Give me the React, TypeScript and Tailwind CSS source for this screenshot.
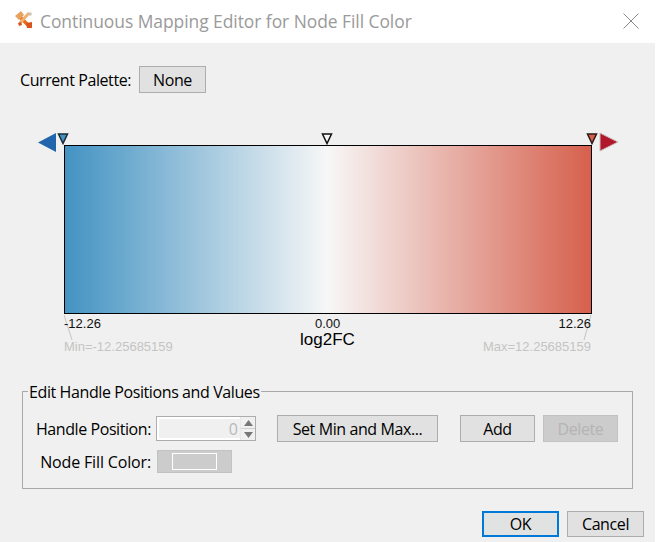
export default function App() {
  const ui = "font-['Open_Sans','Noto_Sans',sans-serif]";
  const btn =
    "flex items-center justify-center border border-[#adadad] bg-[#e1e1e1] text-[16px] leading-none text-black tracking-[-0.4px] " + ui;
  return (
    <div className={"w-[656px] h-[542px] bg-white overflow-hidden " + ui}>
      <div className="h-[43px] flex items-center relative">
        <svg width="18" height="18" viewBox="0 0 18 18" className="ml-[15px] mt-[-3px]">
          <path d="M3 4 L14 15" stroke="#e0701f" strokeWidth="3.6" />
          <path d="M14 2 L5 12" stroke="#f0b070" strokeWidth="3" />
          <path d="M0 5 L6 0 L9 4 L4 9 Z" fill="#e8a25e" />
          <path d="M11 12 L17 11 L17 17 L12 17 Z" fill="#d9531e" />
          <path d="M3 12 L6 11 L7 14 L4 15 Z" fill="#d9531e" />
          <circle cx="15" cy="3" r="1.8" fill="#c9c2b0" />
        </svg>
        <span className="ml-[7px] text-[17.45px] text-[#9a9a9a] tracking-[-0.05px] mt-[-1px]">
          Continuous Mapping Editor for Node Fill Color
        </span>
        <svg width="16" height="16" viewBox="0 0 16 16" className="absolute left-[623px] top-[13px]">
          <path d="M0.5 0.5 L15.5 15.5 M15.5 0.5 L0.5 15.5" stroke="#8a8a8a" strokeWidth="1" fill="none" />
        </svg>
      </div>

      <div className="w-[655px] h-[499px] bg-[#f0f0f0] flex flex-col">
        <div className="flex items-center ml-[20px] mt-[23px] h-[27px]">
          <span className="w-[119px] text-[16px] text-black tracking-[-0.42px]">Current Palette:</span>
          <div className={btn + " w-[67px] h-[27px]"}>None</div>
        </div>

        <div className="relative ml-[64px] mt-[52px] w-[528px] h-[169px] border border-black bg-[linear-gradient(to_right,#4393c3,#f7f7f7_50%,#d6604d)]">
          <svg width="20" height="19" viewBox="0 0 20 19" className="absolute left-[-27px] top-[-13px]">
            <path d="M0 9.5 L18 0 L18 19 Z" fill="#2166ac" />
          </svg>
          <svg width="12" height="12" viewBox="0 0 12 12" className="absolute left-[-8px] top-[-13px]">
            <path d="M1.5 1 L10.5 1 L6 10.5 Z" fill="#4393c3" stroke="#1a2a33" strokeWidth="1.5" />
          </svg>
          <svg width="12" height="12" viewBox="0 0 12 12" className="absolute left-[256px] top-[-13px]">
            <path d="M1.5 1 L10.5 1 L6 10.5 Z" fill="#f7f7f7" stroke="#111" strokeWidth="1.5" />
          </svg>
          <svg width="12" height="12" viewBox="0 0 12 12" className="absolute left-[521px] top-[-13px]">
            <path d="M1.5 1 L10.5 1 L6 10.5 Z" fill="#d6604d" stroke="#2a1a18" strokeWidth="1.5" />
          </svg>
          <svg width="20" height="20" viewBox="0 0 20 20" className="absolute left-[534px] top-[-14px]">
            <path d="M1 1 L19 10 L1 19 Z" fill="#b2182b" stroke="#c8c0c0" strokeWidth="1" />
          </svg>
        </div>

        <div className="relative ml-[64px] w-[528px] h-[41px] font-['Liberation_Sans',sans-serif]">
          <svg width="528" height="32" viewBox="0 0 528 32" className="absolute left-0 top-0">
            <path d="M0 1 L8 26" stroke="#c4c4c4" strokeWidth="1" />
            <path d="M527 1 L520 26" stroke="#c4c4c4" strokeWidth="1" />
          </svg>
          <div className="relative flex justify-between items-start h-[15px] pt-[2px] pr-[1px] text-[13px] leading-[15px] text-[#111]">
            <span>-12.26</span>
            <span className="absolute left-[251px]">0.00</span>
            <span>12.26</span>
          </div>
          <div className="relative flex justify-between items-center h-[22px] pr-[1px] text-[13px] text-[#c4c4c4] leading-none mt-[3px]">
            <span className="mt-[6px]">Min=-12.25685159</span>
            <span className="absolute left-[236px] top-[-1px] text-[17px] text-black">log2FC</span>
            <span className="mt-[6px]">Max=12.25685159</span>
          </div>
        </div>

        <div className="relative ml-[22px] mt-[36px] w-[611px] h-[98px] border border-[#a9a9a9] pt-[23px]">
          <span className="absolute left-[5px] top-[-10px] px-[1px] bg-[#f0f0f0] text-[16px] leading-[20px] text-black tracking-[-0.4px]">
            Edit Handle Positions and Values
          </span>
          <div className="flex items-center h-[27px]">
            <span className="w-[128px] text-right text-[16px] text-black tracking-[-0.42px]">Handle Position:</span>
            <div className="ml-[5px] w-[100px] h-[25px] border border-[#adadad] bg-white flex items-stretch">
              <div className="flex-1 m-[2px] mr-0 bg-[#f0f0f0] flex items-center justify-end pr-[2px] text-[16px] text-[#b8b8b8]">0</div>
              <div className="w-[15px] flex flex-col bg-[#f0f0f0] border-l border-[#e8e8e8]">
                <div className="flex-1 flex items-center justify-center border-b border-[#d0d0d0]">
                  <svg width="9" height="6" viewBox="0 0 9 6"><path d="M0 6 L4.5 0 L9 6 Z" fill="#777" /></svg>
                </div>
                <div className="flex-1 flex items-center justify-center">
                  <svg width="9" height="6" viewBox="0 0 9 6"><path d="M0 0 L4.5 6 L9 0 Z" fill="#777" /></svg>
                </div>
              </div>
            </div>
            <div className={btn + " ml-[21px] w-[161px] h-[27px]"}>Set Min and Max...</div>
            <div className={btn + " ml-[22px] w-[75px] h-[27px]"}>Add</div>
            <div className={btn + " ml-[8px] w-[75px] h-[27px] !bg-[#cccccc] !border-[#c2c2c2] !text-[#b4b4b4]"}>Delete</div>
          </div>
          <div className="flex items-center h-[23px] mt-[8px]">
            <span className="w-[128px] text-right text-[16px] text-black tracking-[-0.15px]">Node Fill Color:</span>
            <div className="ml-[6px] w-[75px] h-[23px] border border-[#c2c2c2] bg-[#cccccc] flex items-center justify-center">
              <div className="w-[45px] h-[17px] border border-white bg-[#cccccc]" />
            </div>
          </div>
        </div>

        <div className="flex justify-end gap-[8px] mt-[22px] mr-[11px]">
          <div className={btn + " w-[77px] h-[26px] !border-2 !border-[#0078d7] !bg-[#e1e3e3]"}>OK</div>
          <div className={btn + " w-[77px] h-[26px]"}>Cancel</div>
        </div>
      </div>
    </div>
  );
}
